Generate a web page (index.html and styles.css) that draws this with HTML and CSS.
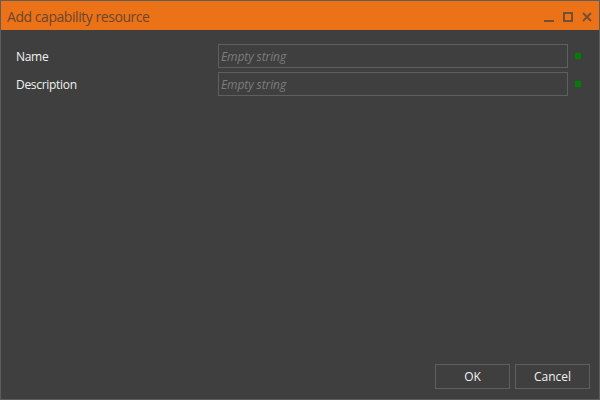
FILE: index.html
```html
<!DOCTYPE html>
<html>
<head>
<meta charset="utf-8">
<link rel="stylesheet" href="styles.css">
</head>
<body>
<div class="window">
  <div class="titlebar">
    <span class="title">Add capability resource</span>
    <div class="controls">
      <svg class="ctl" width="10" height="10" viewBox="0 0 10 10"><rect x="0" y="8" width="10" height="2" fill="currentColor"/></svg>
      <svg class="ctl" width="10" height="10" viewBox="0 0 10 10"><rect x="1" y="1" width="8" height="8" fill="none" stroke="currentColor" stroke-width="2"/></svg>
      <svg class="ctl" width="10" height="10" viewBox="0 0 10 10"><path d="M1 1 L9 9 M9 1 L1 9" stroke="currentColor" stroke-width="1.8" fill="none"/></svg>
    </div>
  </div>
  <div class="content">
    <div class="form">
      <div class="row">
        <label class="label">Name</label>
        <div class="input"><span class="ph">Empty string</span></div>
        <span class="ok-dot"></span>
      </div>
      <div class="row">
        <label class="label">Description</label>
        <div class="input"><span class="ph">Empty string</span></div>
        <span class="ok-dot"></span>
      </div>
    </div>
    <div class="buttons">
      <button class="btn">OK</button>
      <button class="btn">Cancel</button>
    </div>
  </div>
</div>
</body>
</html>
```
FILE: styles.css
```css
html, body {
  margin: 0;
  padding: 0;
  background: #3f3f3f;
}
.window {
  width: 600px;
  height: 400px;
  box-sizing: border-box;
  border: 1px solid #5d5d5d;
  background: #3f3f3f;
  display: flex;
  flex-direction: column;
  font-family: "Open Sans", "Noto Sans", sans-serif;
}
.titlebar {
  height: 29px;
  background: #ec7218;
  display: flex;
  align-items: center;
  padding: 0 7px 0 6px;
  flex: none;
}
.title {
  color: #6a4630;
  font-size: 14px;
  font-weight: 400;
  letter-spacing: -0.45px;
  flex: 1;
  padding-top: 1px;
}
.controls {
  display: flex;
  gap: 9px;
  color: #735035;
  align-items: center;
  padding-top: 3px;
}
.ctl { display: block; }
.content {
  flex: 1;
  display: flex;
  flex-direction: column;
  justify-content: space-between;
  padding: 14px 9px 10px 15px;
}
.form {
  display: flex;
  flex-direction: column;
  gap: 4px;
}
.row {
  display: flex;
  align-items: center;
  height: 24px;
}
.label {
  width: 202px;
  color: #f1f1f1;
  font-size: 12px;
  letter-spacing: -0.3px;
}
.input {
  width: 350px;
  height: 24px;
  box-sizing: border-box;
  border: 1px solid #5f5f5f;
  display: flex;
  align-items: center;
  padding-left: 2px;
}
.ph {
  color: #7d7d7d;
  font-style: italic;
  font-size: 12px;
  letter-spacing: -0.1px;
}
.ok-dot {
  width: 6px;
  height: 6px;
  background: #008000;
  margin-left: 7px;
}
.buttons {
  display: flex;
  justify-content: flex-end;
  gap: 5px;
}
.btn {
  width: 75px;
  height: 25px;
  box-sizing: border-box;
  border: 1px solid #5f5f5f;
  background: transparent;
  color: #f1f1f1;
  font-family: "Open Sans", "Noto Sans", sans-serif;
  font-size: 12px;
  padding: 0;
}
```
